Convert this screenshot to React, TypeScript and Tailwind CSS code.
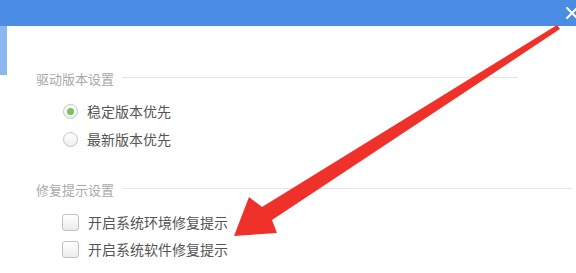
import React from 'react';

const font = { fontFamily: '"Noto Sans CJK SC", "Noto Sans", sans-serif' };

function SectionHeader({ title, last }: { title: string; last?: boolean }) {
  return (
    <div className={`flex items-center h-[18px] pl-[29px] ${last ? 'pr-[4px]' : 'pr-[58px]'}`}>
      <span className="text-[13px] leading-[18px] text-[#a9a9a9]">{title}</span>
      <div className="flex-1 ml-[8px] h-px bg-[#e6e6e6] -mt-[4px]" />
    </div>
  );
}

function Radio({ label, checked }: { label: string; checked?: boolean }) {
  return (
    <div className="flex items-center h-[28px] pl-[56px]">
      <span className="w-[15px] h-[15px] rounded-full border border-[#c4c4c4] bg-gradient-to-b from-white to-[#eeeeee] flex items-center justify-center">
        {checked && <span className="w-[7px] h-[7px] rounded-full bg-[#78c25a]" />}
      </span>
      <span className="ml-[9px] text-[14px] text-[#555555]">{label}</span>
    </div>
  );
}

function Checkbox({ label }: { label: string }) {
  return (
    <div className="flex items-center h-[27px] pl-[55px]">
      <span className="w-[17px] h-[17px] rounded-[3px] border border-[#c2c2c2] bg-gradient-to-b from-white to-[#ececec]" />
      <span className="ml-[9px] text-[14px] text-[#555555]">{label}</span>
    </div>
  );
}

export default function App() {
  return (
    <div className="relative w-[576px] h-[273px] bg-white overflow-hidden" style={font}>
      <div className="h-[26px] bg-[#4b8de4] flex items-start justify-end">
        <svg width="14" height="14" viewBox="0 0 14 14" className="mt-[6px] -mr-[3px]">
          <path d="M2 2 L12 12 M12 2 L2 12" stroke="#ffffff" strokeWidth="2" strokeLinecap="round" />
        </svg>
      </div>
      <div className="flex">
        <div className="w-[7px] shrink-0">
          <div className="h-[49px] bg-[#8cb6ee]" />
        </div>
        <div className="flex-1 pt-[44px]">
          <SectionHeader title="驱动版本设置" />
          <div className="mt-[9px]">
            <Radio label="稳定版本优先" checked />
            <Radio label="最新版本优先" />
          </div>
          <div className="mt-[28px]">
            <SectionHeader title="修复提示设置" last />
          </div>
          <div className="mt-[10px]">
            <Checkbox label="开启系统环境修复提示" />
            <Checkbox label="开启系统软件修复提示" />
          </div>
        </div>
      </div>
      <svg className="absolute inset-0 pointer-events-none" width="576" height="273" viewBox="0 0 576 273">
        <polygon
          points="557,25 262,207 249,197 234,236 277,233 272,220 560,29"
          fill="#f0312a"
        />
      </svg>
    </div>
  );
}
